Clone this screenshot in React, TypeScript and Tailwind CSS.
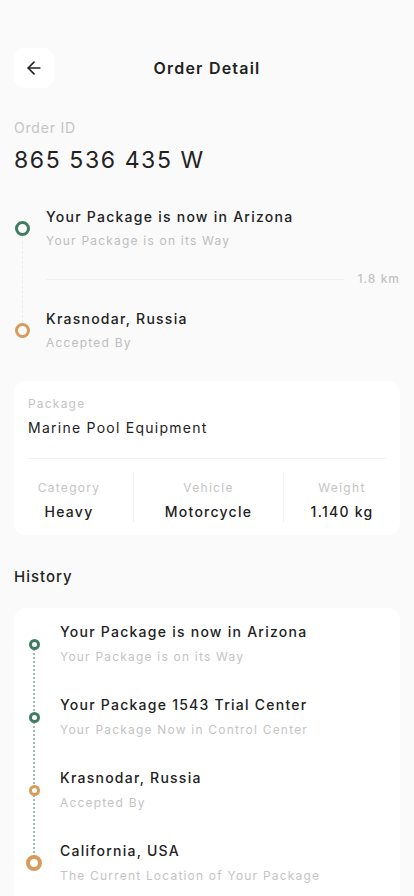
import { ArrowLeft } from 'lucide-react';

const history = [
  { title: 'Your Package is now in Arizona', sub: 'Your Package is on its Way', color: 'green', big: false },
  { title: 'Your Package 1543 Trial Center', sub: 'Your Package Now in Control Center', color: 'green', big: false },
  { title: 'Krasnodar, Russia', sub: 'Accepted By', color: 'orange', big: false },
  { title: 'California, USA', sub: 'The Current Location of Your Package', color: 'orange', big: true },
];

export default function App() {
  return (
    <div
      className="min-h-[896px] w-[414px] bg-[#fafafa] px-[14px] pt-[48px] text-[#222]"
      style={{ fontFamily: 'Inter, "Open Sans", sans-serif' }}
    >
      {/* header */}
      <div className="relative flex h-[40px] items-center justify-center">
        <button className="absolute left-0 top-0 flex h-[40px] w-[40px] items-center justify-center rounded-[10px] bg-white">
          <ArrowLeft size={20} strokeWidth={2} className="text-[#222]" />
        </button>
        <h1 className="text-[16px] font-semibold tracking-[1.2px]">Order Detail</h1>
      </div>

      {/* order id */}
      <div className="mt-[30px]">
        <p className="text-[14px] leading-[20px] tracking-[0.8px] text-[#c4c4c4]">Order ID</p>
        <p className="mt-[9px] text-[23px] leading-[26px] tracking-[1.6px] text-[#222]">865 536 435 W</p>
      </div>

      {/* route */}
      <div className="mt-[34px] flex">
        <div className="flex w-[16px] flex-col items-center pt-[14px]">
          <div className="h-[15px] w-[15px] rounded-full border-[3.5px] border-[#3f7d61]" />
          <div className="h-[87px] border-l border-dashed border-[#ececec]" />
          <div className="h-[15px] w-[15px] rounded-full border-[3.5px] border-[#d89b5b]" />
        </div>
        <div className="ml-[16px] flex-1">
          <p className="text-[14px] font-medium leading-[20px] tracking-[1.25px]">Your Package is now in Arizona</p>
          <p className="mt-[6px] text-[12px] leading-[16px] tracking-[1.2px] text-[#bdbdbd]">Your Package is on its Way</p>
          <div className="mt-[21px] flex items-center">
            <div className="h-px flex-1 bg-[#f0f0f0]" />
            <span className="ml-[14px] text-[12px] font-medium tracking-[1px] text-[#c2c2c2]">1.8 km</span>
          </div>
          <p className="mt-[21px] text-[14px] font-medium leading-[20px] tracking-[1.25px]">Krasnodar, Russia</p>
          <p className="mt-[6px] text-[12px] leading-[16px] tracking-[1.2px] text-[#bdbdbd]">Accepted By</p>
        </div>
      </div>

      {/* package card */}
      <div className="mt-[30px] rounded-[12px] bg-white px-[14px] pb-[13px] pt-[14px]">
        <p className="text-[12px] leading-[18px] tracking-[1.2px] text-[#c4c4c4]">Package</p>
        <p className="mt-[5px] text-[14px] leading-[20px] tracking-[1.25px]">Marine Pool Equipment</p>
        <div className="mt-[20px] h-px bg-[#f2f2f2]" />
        <div className="mt-[21px] flex">
          <div className="w-[82px] text-center">
            <p className="text-[12px] leading-[16px] tracking-[1.3px] text-[#c4c4c4]">Category</p>
            <p className="mt-[6px] text-[14px] font-medium leading-[20px] tracking-[1.25px]">Heavy</p>
          </div>
          <div className="ml-[23px] -mt-[8px] w-px bg-[#f0f0f0]" />
          <div className="w-[149px] text-center">
            <p className="text-[12px] leading-[16px] tracking-[1.3px] text-[#c4c4c4]">Vehicle</p>
            <p className="mt-[6px] text-[14px] font-medium leading-[20px] tracking-[1.25px]">Motorcycle</p>
          </div>
          <div className="-mt-[8px] w-px bg-[#f0f0f0]" />
          <div className="flex-1 pl-[14px] text-center">
            <p className="text-[12px] leading-[16px] tracking-[1.3px] text-[#c4c4c4]">Weight</p>
            <p className="mt-[6px] text-[14px] font-medium leading-[20px] tracking-[1.25px]">1.140 kg</p>
          </div>
        </div>
      </div>

      {/* history */}
      <h2 className="mt-[31px] text-[15px] font-medium leading-[22px] tracking-[1px]">History</h2>
      <div className="mt-[20px] rounded-t-[12px] bg-white pr-[14px] pt-[14px] pb-[10px]">
        {history.map((item, i) => {
          const last = i === history.length - 1;
          return (
            <div key={i} className="flex">
              <div className="relative flex w-[40px] justify-center">
                {!last && (
                  <div className="absolute left-1/2 top-[20px] h-[73px] -translate-x-1/2 border-l-2 border-dotted border-[#a3bcb2]" />
                )}
                <div
                  className={
                    item.big
                      ? 'relative z-10 mt-[14px] h-[16px] w-[16px] rounded-full border-[4.5px] border-[#d89b5b] bg-white'
                      : item.color === 'green'
                        ? 'relative z-10 mt-[16.5px] h-[11px] w-[11px] rounded-full border-[3.5px] border-[#3f7d61] bg-white'
                        : 'relative z-10 mt-[16.5px] h-[11px] w-[11px] rounded-full border-[3.5px] border-[#d89b5b] bg-white'
                  }
                />
              </div>
              <div className="ml-[6px] h-[73px]">
                <p className="text-[14px] font-medium leading-[20px] tracking-[1.25px]">{item.title}</p>
                <p className="mt-[7px] text-[12px] leading-[16px] tracking-[1.2px] text-[#c4c4c4]">{item.sub}</p>
              </div>
            </div>
          );
        })}
      </div>
    </div>
  );
}
